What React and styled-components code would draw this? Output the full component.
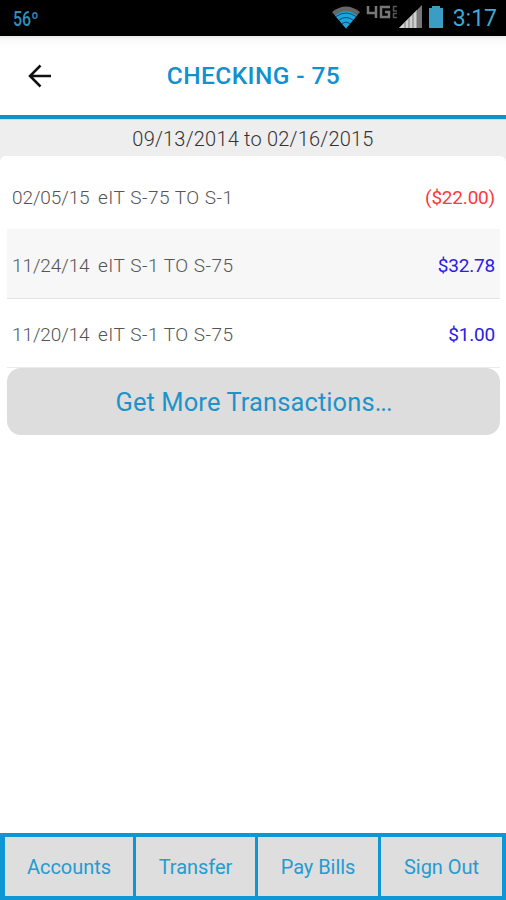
import styled, { createGlobalStyle } from 'styled-components';

const GlobalStyle = createGlobalStyle`
  * {
    box-sizing: border-box;
  }

  body {
    margin: 0;
    background: #fff;
    font-family: Roboto, 'Noto Sans', sans-serif;
  }

  button {
    border: 0;
    padding: 0;
    font-family: inherit;
    cursor: pointer;
  }
`;

const Screen = styled.div`
  width: 100%;
  height: 900px;
  display: flex;
  flex-direction: column;
  overflow: hidden;
`;

const StatusBar = styled.div`
  height: 36px;
  flex: none;
  display: flex;
  justify-content: space-between;
  padding: 0 9px 0 13px;
  background: #000;
`;

const Temperature = styled.span`
  color: #2f8fb8;
  font-size: 20px;
  font-weight: 500;
  line-height: 39px;
  transform: scaleX(0.8);
  transform-origin: left;
`;

const StatusIcons = styled.div`
  display: flex;
  align-items: flex-start;

  svg {
    display: block;
  }
`;

const Clock = styled.span`
  margin-left: 6px;
  color: #3fa9d8;
  font-size: 23px;
  line-height: 38px;
`;

const Header = styled.header`
  height: 83px;
  flex: none;
  display: grid;
  grid-template-columns: 80px 1fr 80px;
  align-items: center;
  border-bottom: 4px solid #1191cf;
  background: linear-gradient(#e9e9e9, #fafafa 4px, #fff 12px);
`;

const BackButton = styled.button`
  height: 60px;
  display: flex;
  align-items: center;
  justify-content: center;
  background: none;
`;

const Title = styled.h1`
  margin: 0;
  padding-left: 1px;
  color: #1191cf;
  font-size: 24.5px;
  font-weight: 500;
  line-height: 30px;
  text-align: center;
  letter-spacing: 0.4px;
`;

const DateRange = styled.div`
  height: 43px;
  flex: none;
  margin-bottom: -6px;
  border-top: 1px solid #bfe0f0;
  background: #eee;
  color: #333;
  font-size: 20px;
  font-weight: 300;
  line-height: 38px;
  text-align: center;
  letter-spacing: 0.2px;
`;

const Content = styled.main`
  flex: 1;
  padding: 5px 6px 0 7px;
  border-radius: 6px 6px 0 0;
  background: #fff;
`;

const Transaction = styled.div`
  height: 69px;
  display: flex;
  align-items: center;
  padding: 2px 5px 0;
  border-bottom: 1px solid ${({ $shaded }) => ($shaded ? '#e4e4e4' : '#ebebeb')};
  background: ${({ $shaded }) => ($shaded ? '#f7f7f7' : '#fff')};
  color: #555;
  font-size: 19px;
  font-weight: 300;

  &:first-child {
    padding-top: 4px;
    border-bottom-color: #f7f7f7;
  }
`;

const TransactionDate = styled.span`
  width: 86px;
  letter-spacing: -0.1px;
`;

const Description = styled.span`
  flex: 1;
  letter-spacing: 0.5px;
`;

const Amount = styled.span`
  color: ${({ $negative }) => ($negative ? '#fa3a3a' : '#2a20e4')};
  font-weight: 400;
  letter-spacing: -0.2px;
`;

const MoreButton = styled.button`
  width: 100%;
  height: 67px;
  display: block;
  border-radius: 14px;
  background: #ddd;
  color: #1c93c9;
  font-size: 25.5px;
  letter-spacing: 0.1px;
`;

const Dots = styled.span`
  letter-spacing: -1.1px;
`;

const TabBar = styled.nav`
  height: 67px;
  flex: none;
  display: grid;
  grid-template-columns: 128px 119px 120px 121px;
  gap: 3px;
  padding: 4px 4px 4px 5px;
  background: #0f97d5;
`;

const Tab = styled.button`
  padding-top: 1px;
  background: #dedede;
  color: #259bd0;
  font-size: 20px;
  letter-spacing: -0.05px;
`;

const WifiIcon = () => (
  <svg width="30" height="36" viewBox="0 0 30 36">
    <path d="M1 12Q15 1 29 12L15 28.500Z" fill="#666" />
    <path d="M4 15.500Q15 7 26 15.500L15 28.500Z" fill="#1da4dd" />
    <path d="M5 16.500Q15 9.500 25 16.500M8 20Q15 15 22 20M11 23.500Q15 20.500 19 23.500" fill="none" stroke="#0b4c6b" />
  </svg>
);

const NetworkIcon = () => (
  <svg width="38" height="36" viewBox="-4 0 38 36">
    <g fill="none" stroke="#777" strokeWidth="2.500">
      <path d="M3 6V13H12M11 6V18" />
      <path d="M25 7H16V17H24V12H20" />
    </g>
    <path d="M32 6.500H28.500V11H32M32 13.500H28.500V17.500H32" fill="none" stroke="#555" strokeWidth="1.500" />
  </svg>
);

const SignalIcon = () => (
  <svg width="24" height="36" viewBox="0 0 24 36">
    <path d="M0 28L23 5V28Z" fill="#777" />
    <path d="M0 28L18 10V28Z" fill="#d0d0d0" />
    <path d="M6 22V28M10 18V28M14 14V28M18 10V28" stroke="#777" />
  </svg>
);

const BatteryIcon = () => (
  <svg width="24" height="36" viewBox="-2 0 24 36">
    <path d="M7 8V6H15V8H18V28H4V8Z" fill="#3b9dc4" />
  </svg>
);

const ArrowIcon = () => (
  <svg width="24" height="24" viewBox="0 0 24 24">
    <path d="M23 12H2.500M12.500 1.500L2 12L12.500 22.500" fill="none" stroke="#111" strokeWidth="2.500" />
  </svg>
);

const TRANSACTIONS = [
  { date: '02/05/15', description: 'eIT S-75 TO S-1', amount: '($22.00)', negative: true },
  { date: '11/24/14', description: 'eIT S-1 TO S-75', amount: '$32.78' },
  { date: '11/20/14', description: 'eIT S-1 TO S-75', amount: '$1.00' },
];

const TABS = ['Accounts', 'Transfer', 'Pay Bills', 'Sign Out'];

const App = () => {
  return (
    <Screen>
      <GlobalStyle />
      <StatusBar>
        <Temperature>56º</Temperature>
        <StatusIcons>
          <WifiIcon />
          <NetworkIcon />
          <SignalIcon />
          <BatteryIcon />
          <Clock>3:17</Clock>
        </StatusIcons>
      </StatusBar>
      <Header>
        <BackButton aria-label="Back">
          <ArrowIcon />
        </BackButton>
        <Title>CHECKING - 75</Title>
      </Header>
      <DateRange>09/13/2014 to 02/16/2015</DateRange>
      <Content>
        {TRANSACTIONS.map(({ date, description, amount, negative }, index) => (
          <Transaction key={date} $shaded={index % 2 === 1}>
            <TransactionDate>{date}</TransactionDate>
            <Description>{description}</Description>
            <Amount $negative={negative}>{amount}</Amount>
          </Transaction>
        ))}
        <MoreButton>
          Get More Transactions<Dots>...</Dots>
        </MoreButton>
      </Content>
      <TabBar>
        {TABS.map((tab) => (
          <Tab key={tab}>{tab}</Tab>
        ))}
      </TabBar>
    </Screen>
  );
};

export default App;
